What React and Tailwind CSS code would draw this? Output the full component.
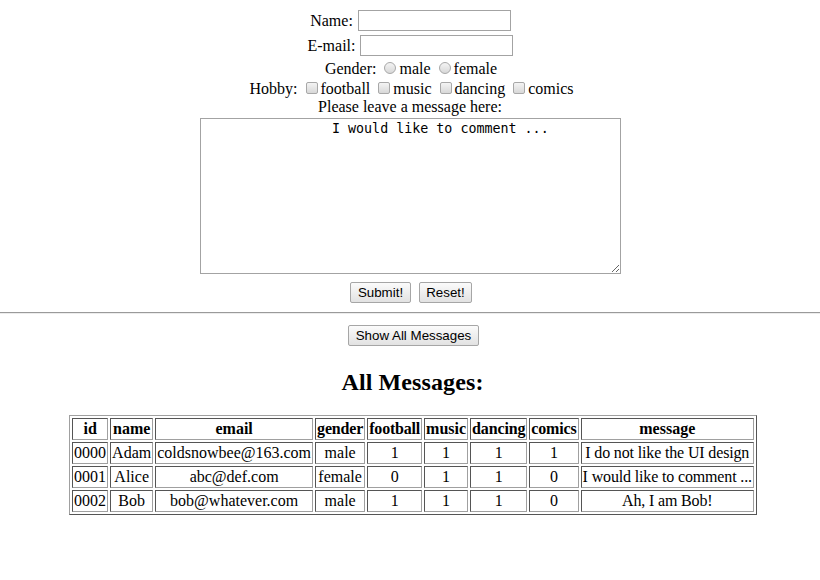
import React from "react";

function Radio() {
  return (
    <span className="inline-block align-middle w-[12px] h-[12px] rounded-full border border-[#a8a8a8] bg-gradient-to-b from-[#f4f4f4] to-[#d8d8d8] ml-[4px] mr-[3px] -translate-y-[2px]" />
  );
}

function Check() {
  return (
    <span className="inline-block align-middle w-[12px] h-[12px] rounded-[2px] border border-[#a8a8a8] bg-gradient-to-b from-[#f4f4f4] to-[#d8d8d8] ml-[4px] mr-[3px] -translate-y-[2px]" />
  );
}

function Btn({ children, w }) {
  return (
    <button
      className={`h-[21px] ${w} border border-[#a6a6a6] rounded-[2px] bg-gradient-to-b from-[#fbfbfb] to-[#e2e2e2] font-['Liberation_Sans'] text-[13.333px] leading-[19px] text-black px-0`}
    >
      {children}
    </button>
  );
}

const rows = [
  ["0000", "Adam", "coldsnowbee@163.com", "male", "1", "1", "1", "1", "I do not like the UI design"],
  ["0001", "Alice", "abc@def.com", "female", "0", "1", "1", "0", "I would like to comment ..."],
  ["0002", "Bob", "bob@whatever.com", "male", "1", "1", "1", "0", "Ah, I am Bob!"],
];
const heads = ["id", "name", "email", "gender", "football", "music", "dancing", "comics", "message"];
const headTrack = ["", "", "", "tracking-[-0.15px]", "tracking-[-0.2px]", "", "tracking-[-0.15px]", "tracking-[-0.15px]", ""];
const cellTrack = ["", "", "", "", "", "", "", "", "tracking-[-0.15px]"];

export default function App() {
  return (
    <div className="w-[820px] h-[580px] bg-white text-black font-['Liberation_Serif',serif] text-[16px] flex flex-col items-center text-center">
      <div className="mt-[10px] h-[21px] flex items-center gap-[5px] pl-[1px]">
        <span className="leading-[18px]">Name:</span>
        <span className="w-[153px] h-[21px] border border-[#a3a3a3] bg-white" />
      </div>
      <div className="mt-[4px] h-[21px] flex items-center gap-[5px] pl-[1px]">
        <span className="leading-[18px]">E-mail:</span>
        <span className="w-[153px] h-[21px] border border-[#a3a3a3] bg-white" />
      </div>
      <div className="mt-[2px] h-[20px] pt-[2px] leading-[18px] whitespace-pre pl-[2px]">
        Gender:{" "}<Radio />male{" "}<Radio />female
      </div>
      <div className="h-[20px] pt-[2px] leading-[18px] whitespace-pre pl-[3px]">
        Hobby:{" "}<Check />football{" "}<Check />music{" "}<Check />dancing{" "}<Check />comics
      </div>
      <div className="h-[18px] leading-[18px]">Please leave a message here:</div>
      <textarea
        className="mt-[2px] w-[421px] h-[156px] border border-[#a3a3a3] pt-[2px] pr-[2px] pb-[2px] pl-[131px] text-left font-['DejaVu_Sans_Mono',monospace] text-[13.333px] leading-[16px] text-black resize-y ml-[1px]"
        defaultValue="I would like to comment ..."
      />
      <div className="mt-[8px] flex gap-[8px] ml-[2px]">
        <Btn w="w-[61px]">Submit!</Btn>
        <Btn w="w-[53px]">Reset!</Btn>
      </div>
      <div className="mt-[9px] w-full border-t border-t-[#9a9a9a] border-b border-b-[#ececec]" />
      <div className="mt-[9px] ml-[7px]">
        <Btn w="w-[131px]">Show All Messages</Btn>
      </div>
      <h2 className="mt-[21px] h-[28px] leading-[28px] text-[24px] font-bold ml-[5px] tracking-[0.1px]">All Messages:</h2>
      <table className="mt-[19px] border-separate border-spacing-[2px] border border-t-[#a0a0a0] border-l-[#a0a0a0] border-b-[#555555] border-r-[#555555] ml-[6px]">
        <thead>
          <tr>
            {heads.map((h, i) => (
              <th key={h} className={`p-[1px] leading-[18px] font-bold border border-t-[#555555] border-l-[#555555] border-b-[#a0a0a0] border-r-[#a0a0a0] ${headTrack[i]}`}>
                {h}
              </th>
            ))}
          </tr>
        </thead>
        <tbody>
          {rows.map((r) => (
            <tr key={r[0]}>
              {r.map((c, i) => (
                <td key={i} className={`p-[1px] leading-[18px] text-center whitespace-nowrap border border-t-[#555555] border-l-[#555555] border-b-[#a0a0a0] border-r-[#a0a0a0] ${cellTrack[i]}`}>
                  {c}
                </td>
              ))}
            </tr>
          ))}
        </tbody>
      </table>
    </div>
  );
}
